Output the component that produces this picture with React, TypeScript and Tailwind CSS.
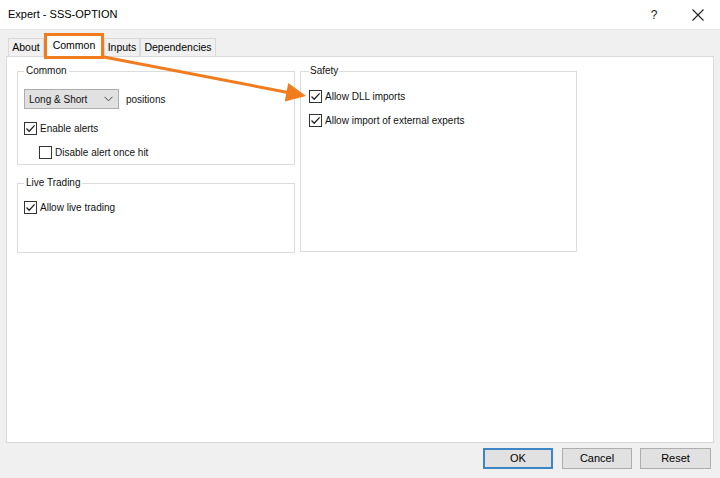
import React from "react";

function Check({ checked }: { checked: boolean }) {
  return (
    <span className="w-[13px] h-[13px] border border-[#333333] bg-white flex items-center justify-center shrink-0">
      {checked && (
        <svg width="11" height="11" viewBox="0 0 11 11">
          <path d="M1.5 5.5 L4.2 8.2 L9.6 2.4" fill="none" stroke="#222" strokeWidth="1.3" />
        </svg>
      )}
    </span>
  );
}

function CheckRow({ checked, label, className = "" }: { checked: boolean; label: string; className?: string }) {
  return (
    <div className={"flex items-center gap-[3px] h-[13px] " + className}>
      <Check checked={checked} />
      <span className="leading-[13px] text-[#111]">{label}</span>
    </div>
  );
}

function Tab({ label, w, selected = false }: { label: string; w: string; selected?: boolean }) {
  if (selected) {
    return (
      <div className={"relative h-[22px] self-end bg-white border border-b-0 border-[#d9d9d9] flex items-center justify-center -mb-[1px] z-10 " + w}>
        <span className="text-[10.5px] text-black -mt-[1px]">{label}</span>
        <div className="absolute -left-[1px] -top-[3px] -right-[1px] -bottom-[2px] border-[3px] border-[#f07c1e]" />
      </div>
    );
  }
  return (
    <div className={"h-[18px] self-end bg-[#f0f0f0] border border-b-0 border-[#d9d9d9] flex items-center justify-center " + w}>
      <span className="text-[10.5px] text-black">{label}</span>
    </div>
  );
}

export default function App() {
  return (
    <div className="relative w-[720px] h-[478px] overflow-hidden bg-[#f0f0f0] font-['Liberation_Sans',Arial,sans-serif] text-[10px] text-[#111]">
      {/* Title bar */}
      <div className="h-[30px] bg-white flex items-center justify-between border-b border-[#e6e6e6]">
        <span className="pl-[8px] text-[11px] text-black">Expert - SSS-OPTION</span>
        <div className="flex items-center h-full">
          <span className="w-[12px] text-[12px] text-[#222] text-center">?</span>
          <span className="w-[32px]" />
          <svg width="12" height="12" viewBox="0 0 12 12" className="mr-[16px]">
            <path d="M0.5 0.5 L11.5 11.5 M11.5 0.5 L0.5 11.5" stroke="#222" strokeWidth="1.1" />
          </svg>
        </div>
      </div>

      {/* Tabs */}
      <div className="pl-[6px]">
        <div className="flex items-end h-[26px] pl-[2px]">
          <Tab label="About" w="w-[36px]" />
          <Tab label="Common" w="w-[60px]" selected />
          <Tab label="Inputs" w="w-[36px]" />
          <Tab label="Dependencies" w="w-[76px]" />
        </div>

        {/* Panel */}
        <div className="w-[708px] h-[387px] bg-white border border-[#d9d9d9] flex gap-[5px] pl-[10px] pt-[8px]">
          <div className="w-[278px] flex flex-col gap-[12px]">
            <fieldset className="h-[100px] border border-[#dcdcdc] pl-[6px] pt-[12px]">
              <legend className="px-[2px] leading-[12px]">Common</legend>
              <div className="flex items-center gap-[7px]">
                <div className="w-[95px] h-[20px] bg-[#e1e1e1] border border-[#adadad] flex items-center justify-between pl-[4px] pr-[5px]">
                  <span>Long &amp; Short</span>
                  <svg width="9" height="6" viewBox="0 0 9 6">
                    <path d="M0.5 0.8 L4.5 4.8 L8.5 0.8" fill="none" stroke="#444" strokeWidth="1" />
                  </svg>
                </div>
                <span>positions</span>
              </div>
              <CheckRow checked label="Enable alerts" className="mt-[13px]" />
              <CheckRow checked={false} label="Disable alert once hit" className="mt-[11px] ml-[15px]" />
            </fieldset>
            <fieldset className="h-[76px] border border-[#dcdcdc] pl-[6px] pt-[12px]">
              <legend className="px-[2px] leading-[12px]">Live Trading</legend>
              <CheckRow checked label="Allow live trading" />
            </fieldset>
          </div>
          <fieldset className="w-[277px] h-[187px] border border-[#dcdcdc] pl-[8px] pt-[13px]">
            <legend className="px-[1px] leading-[12px]">Safety</legend>
            <CheckRow checked label="Allow DLL imports" />
            <CheckRow checked label="Allow import of external experts" className="mt-[11px]" />
          </fieldset>
        </div>
      </div>

      {/* Buttons */}
      <div className="flex justify-end gap-[8px] pr-[9px] mt-[5px]">
        <div className="w-[70px] h-[21px] bg-[#e1e1e1] border-2 border-[#3c86c6] flex items-center justify-center text-[11px] text-black">OK</div>
        <div className="w-[70px] h-[21px] bg-[#e1e1e1] border border-[#adadad] flex items-center justify-center text-[11px] text-black ml-[1px]">Cancel</div>
        <div className="w-[71px] h-[21px] bg-[#e1e1e1] border border-[#adadad] flex items-center justify-center text-[11px] text-black">Reset</div>
      </div>

      {/* Arrow overlay */}
      <svg className="absolute left-0 top-0 pointer-events-none" width="720" height="478" viewBox="0 0 720 478">
        <line x1="104" y1="57" x2="288" y2="92.5" stroke="#f07c1e" strokeWidth="3" />
        <polygon points="306,96 284.7,101.5 288.3,83" fill="#f07c1e" />
      </svg>
    </div>
  );
}
